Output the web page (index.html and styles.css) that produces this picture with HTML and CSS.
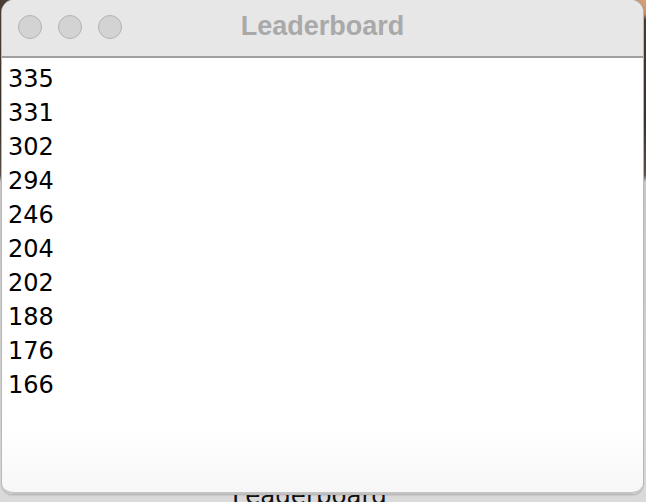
FILE: index.html
```html
<!DOCTYPE html>
<html>
<head>
<meta charset="utf-8">
<link rel="stylesheet" href="styles.css">
</head>
<body>
<div class="desktop">
  <div class="behind-title">Leaderboard</div>
  <div class="window">
    <div class="titlebar">
      <div class="lights">
        <span class="light"></span>
        <span class="light"></span>
        <span class="light"></span>
      </div>
      <div class="title">Leaderboard</div>
    </div>
    <div class="content">
      <div class="row">335</div>
      <div class="row">331</div>
      <div class="row">302</div>
      <div class="row">294</div>
      <div class="row">246</div>
      <div class="row">204</div>
      <div class="row">202</div>
      <div class="row">188</div>
      <div class="row">176</div>
      <div class="row">166</div>
    </div>
  </div>
</div>
</body>
</html>
```
FILE: styles.css
```css
html, body {
  margin: 0;
  padding: 0;
}
body {
  width: 646px;
  height: 502px;
  overflow: hidden;
}
.desktop {
  position: relative;
  width: 646px;
  height: 502px;
  background:
    radial-gradient(circle at 646px 0px, #d9a27c 0, #c58d68 14px, rgba(0,0,0,0) 20px),
    linear-gradient(to bottom, #4a3d33 0, #3b322c 120px, #5b5048 175px, #c9c9c9 182px, #d2d2d2 400px, #dadada 502px);
  overflow: hidden;
}
.behind-title {
  position: absolute;
  left: 232px;
  top: 481px;
  font-family: "DejaVu Sans", sans-serif;
  font-size: 24.5px;
  color: #111;
  white-space: nowrap;
}
.window {
  position: absolute;
  left: 2px;
  top: 0;
  width: 641px;
  height: 494px;
  border-radius: 13px 13px 11px 11px;
  background: #fff;
  box-shadow: 0 0 0 1px #b8b8b8, 0 1px 2px rgba(0,0,0,0.25);
  overflow: hidden;
  display: flex;
  flex-direction: column;
}
.titlebar {
  position: relative;
  height: 56px;
  flex: none;
  background: #e7e7e7;
  border-bottom: 2px solid #9f9f9f;
  display: flex;
  align-items: center;
  justify-content: center;
}
.lights {
  position: absolute;
  left: 16px;
  top: 15px;
  display: flex;
  gap: 16px;
}
.light {
  width: 22px;
  height: 22px;
  border-radius: 50%;
  background: #d3d3d3;
  border: 1px solid #b3b3b3;
}
.title {
  font-family: "Liberation Sans", Arial, sans-serif;
  font-weight: bold;
  font-size: 27px;
  color: #a9a9a9;
  margin-top: -3px;
}
.content {
  flex: 1;
  padding: 4px 0 0 6px;
  background: linear-gradient(to bottom, #fff 0, #fff 370px, #f7f7f7 100%);
  border-bottom: 2px solid #c4c4c4;
  border-radius: 0 0 11px 11px;
}
.row {
  font-family: "DejaVu Sans", sans-serif;
  font-size: 24px;
  line-height: 34px;
  height: 34px;
  color: #000;
}
```
